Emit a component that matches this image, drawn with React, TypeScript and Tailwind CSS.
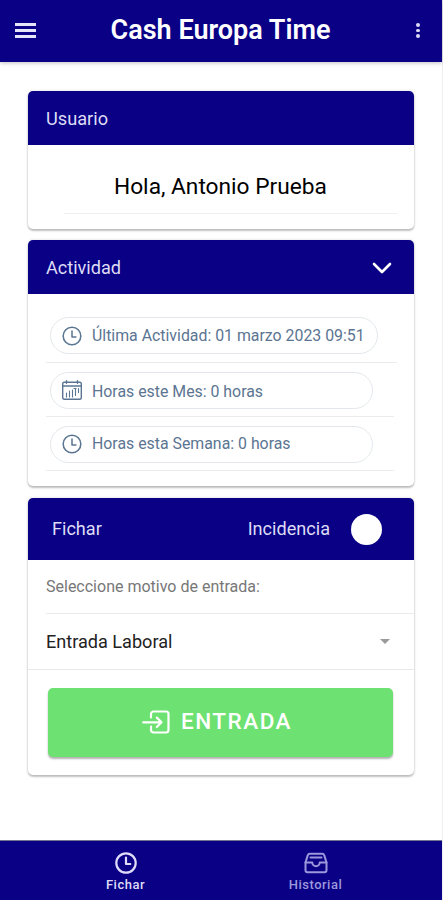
import type { ReactNode } from "react";

function ClockIcon({ className }: { className: string }) {
  return (
    <svg
      viewBox="0 0 22 22"
      className={`shrink-0 ${className}`}
      fill="none"
      stroke="currentColor"
      strokeLinecap="round"
      strokeLinejoin="round"
    >
      <circle cx="11" cy="11" r="9.7" />
      <path d="M11 5.500v6.500h4.300" />
    </svg>
  );
}

function CalendarIcon() {
  return (
    <svg
      viewBox="0 0 20 20"
      className="-mt-1 size-5 shrink-0"
      fill="none"
      stroke="currentColor"
      strokeWidth="1.4"
      strokeLinecap="round"
    >
      <rect x="0.7" y="2.2" width="18.6" height="17" rx="1.5" />
      <path d="M0.7 6h18.6M4.500 0.700v2.500M15.500 0.700v2.500" />
      <path
        d="M4.500 13v4M7.500 11v6M10.500 10v7M13.500 8.500v7M16.500 8.500v4M12 8.500h2"
        strokeWidth="1.1"
      />
    </svg>
  );
}

function EnterIcon() {
  return (
    <svg
      viewBox="0 0 28 24"
      className="h-6 w-7 shrink-0"
      fill="none"
      stroke="currentColor"
      strokeWidth="2.2"
      strokeLinecap="round"
      strokeLinejoin="round"
    >
      <path d="M9 7.500V4a2.500 2.500 0 0 1 2.500-2.500H24A2.500 2.500 0 0 1 26.500 4v16a2.500 2.500 0 0 1-2.500 2.500H11.500A2.500 2.500 0 0 1 9 20v-3.500" />
      <path d="M1.200 12.300H19M14.800 7.600l4.700 4.700-4.700 4.700" />
    </svg>
  );
}

function TrayIcon() {
  return (
    <svg
      viewBox="0 0 24 22"
      className="h-[22px] w-6 shrink-0"
      fill="none"
      stroke="currentColor"
      strokeWidth="2"
      strokeLinecap="round"
      strokeLinejoin="round"
    >
      <path d="M1.500 10.500 3.700 3.400A2.300 2.300 0 0 1 5.900 1.700h12.200a2.300 2.300 0 0 1 2.200 1.700l2.200 7.100v7.700a2 2 0 0 1-2 2h-17a2 2 0 0 1-2-2z" />
      <path d="M1.500 10.500h6.800a3.700 3.700 0 0 0 7.400 0h6.800M6.500 5.500h11" />
    </svg>
  );
}

function Card({ className, children }: { className: string; children: ReactNode }) {
  return (
    <section
      className={`mx-auto w-[386px] overflow-hidden rounded-[5px] bg-white shadow-[0_2px_2px_rgba(0,0,0,0.22),0_0_3px_rgba(0,0,0,0.16)] ${className}`}
    >
      {children}
    </section>
  );
}

function Chip({ icon, className, children }: { icon: ReactNode; className: string; children: ReactNode }) {
  return (
    <div
      className={`ml-1 flex h-[37px] items-center gap-2.5 rounded-full border border-[#e3e7eb] pl-[11px] text-[#5b7592] ${className}`}
    >
      {icon}
      <span className="whitespace-nowrap">{children}</span>
    </div>
  );
}

export default function App() {
  return (
    <div className="flex h-[900px] w-[443px] flex-col border-r border-[#eceef2] bg-white font-[Roboto,sans-serif] text-black">
      <header className="z-10 flex h-[62px] shrink-0 items-center bg-[#090085] pr-[22px] pb-px pl-[15px] text-white shadow-[0_1px_4px_rgba(0,0,0,0.25)]">
        <button aria-label="Menu" className="flex w-[21px] flex-col gap-[3.5px]">
          <span className="h-[2.5px] bg-[#e6e4f8]" />
          <span className="h-[2.5px] bg-[#e6e4f8]" />
          <span className="h-[2.5px] bg-[#e6e4f8]" />
        </button>
        <h1 className="-ml-[11px] flex-1 text-center text-[27px] font-semibold whitespace-nowrap">
          Cash Europa Time
        </h1>
        <button aria-label="Options" className="flex w-1 flex-col gap-[2px]">
          <span className="size-[3.5px] rounded-full bg-[#dcd9f5]" />
          <span className="size-[3.5px] rounded-full bg-[#dcd9f5]" />
          <span className="size-[3.5px] rounded-full bg-[#dcd9f5]" />
        </button>
      </header>

      <main className="flex flex-1 flex-col">
        <Card className="mt-[29px] h-[138px]">
          <h2 className="flex h-[54px] items-center bg-[#090085] pt-0.5 pl-[18px] text-[18.2px] text-[#dedcf5]">
            Usuario
          </h2>
          <div className="mr-[17px] ml-9 flex h-[69px] items-center border-b border-[#efefef] pt-4 pl-[50px] text-[22.7px] whitespace-nowrap">
            Hola, Antonio Prueba
          </div>
        </Card>

        <Card className="mt-[11px] h-[246px]">
          <h2 className="flex h-[54px] items-center justify-between bg-[#090085] pt-0.5 pr-[22px] pl-[18px] text-[18.1px] text-[#dedcf5]">
            Actividad
            <svg
              viewBox="0 0 20 12"
              className="h-3 w-5"
              fill="none"
              stroke="white"
              strokeWidth="2.6"
              strokeLinecap="round"
              strokeLinejoin="round"
            >
              <path d="M2 2l8 8 8-8" />
            </svg>
          </h2>
          <div className="mr-4 ml-[18px] pt-[23px] text-[15.86px]">
            <div className="mr-px h-[46px] border-b border-[#ececec]">
              <Chip className="w-[328px]" icon={<ClockIcon className="size-5 stroke-[1.7]" />}>
                Última Actividad: 01 marzo 2023 09:51
              </Chip>
            </div>
            <div className="mr-1 h-[54px] border-b border-[#ececec] pt-[9px]">
              <Chip className="w-[323px] pt-0.5" icon={<CalendarIcon />}>
                Horas este Mes: 0 horas
              </Chip>
            </div>
            <div className="mr-1 h-[54px] border-b border-[#ececec] pt-[9px]">
              <Chip className="w-[323px] pb-0.5" icon={<ClockIcon className="size-5 stroke-[1.7]" />}>
                Horas esta Semana: 0 horas
              </Chip>
            </div>
          </div>
        </Card>

        <Card className="mt-3 h-[277px]">
          <div className="flex h-[62px] items-center bg-[#090085] pr-8 pl-6 text-[18.1px] text-[#dedcf5]">
            <h2>Fichar</h2>
            <span className="ml-auto">Incidencia</span>
            <span className="ml-[21px] size-[31px] rounded-full bg-white" />
          </div>
          <div className="ml-[18px] flex h-[54px] items-center border-b border-[#ececec] text-[16px] text-[#777]">
            Seleccione motivo de entrada:
          </div>
          <div className="flex h-14 items-center justify-between border-b border-[#e8e8e8] pr-6 pl-[18px] text-[18.1px] text-[#222]">
            Entrada Laboral
            <span className="border-x-[5px] border-t-[5px] border-x-transparent border-t-[#9a9a9a]" />
          </div>
          <button className="mt-[18px] ml-5 flex h-[69px] w-[345px] items-center justify-center gap-[11px] rounded-[5px] bg-[#6de172] pr-[7px] pb-0.5 text-[22.5px] font-medium tracking-[1.5px] text-white shadow-[0_2px_2px_rgba(0,0,0,0.3)]">
            <EnterIcon />
            ENTRADA
          </button>
        </Card>
      </main>

      <nav className="flex h-[60px] shrink-0 border-t border-[#75738f] bg-[#090085] text-[13px] font-medium">
        <button className="flex w-[251px] flex-col items-center pt-[11px] text-[#dedcf8]">
          <ClockIcon className="size-[22px] stroke-[2.2]" />
          <span className="pt-0.5 leading-[18px] tracking-[0.5px]">Fichar</span>
        </button>
        <button className="flex w-[129px] flex-col items-center pt-[11px] text-[#9d98dc]">
          <TrayIcon />
          <span className="pt-0.5 leading-[18px] tracking-[0.5px]">Historial</span>
        </button>
      </nav>
    </div>
  );
}
